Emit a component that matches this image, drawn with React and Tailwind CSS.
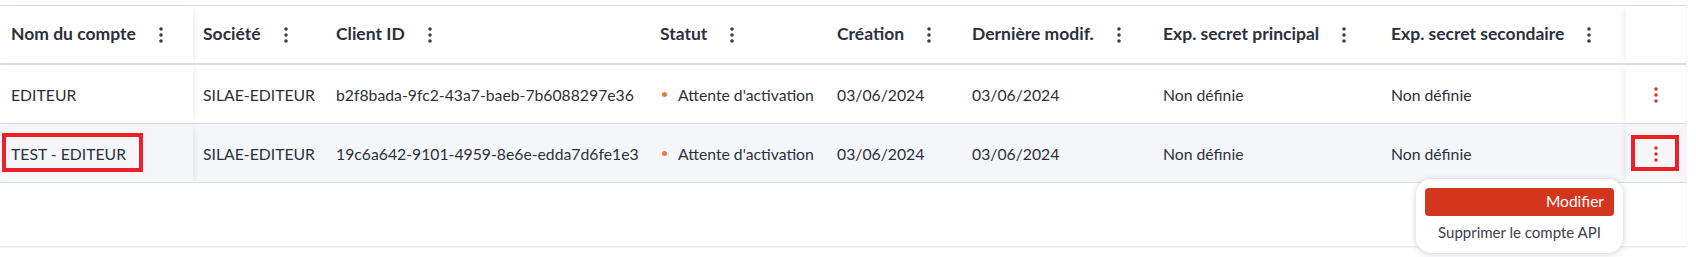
import { Fragment } from 'react'

const columns = [
  { label: 'Nom du compte', key: 'name' },
  { label: 'Société', key: 'company' },
  { label: 'Client ID', key: 'clientId' },
  { label: 'Statut', key: 'status' },
  { label: 'Création', key: 'created' },
  { label: 'Dernière modif.', key: 'updated' },
  { label: 'Exp. secret principal', key: 'expMain' },
  { label: 'Exp. secret secondaire', key: 'expSecond' },
]

const rows = [
  {
    name: 'EDITEUR',
    company: 'SILAE-EDITEUR',
    clientId: 'b2f8bada-9fc2-43a7-baeb-7b6088297e36',
    status: "Attente d'activation",
    created: '03/06/2024',
    updated: '03/06/2024',
    expMain: 'Non définie',
    expSecond: 'Non définie',
  },
  {
    name: 'TEST - EDITEUR',
    company: 'SILAE-EDITEUR',
    clientId: '19c6a642-9101-4959-8e6e-edda7d6fe1e3',
    status: "Attente d'activation",
    created: '03/06/2024',
    updated: '03/06/2024',
    expMain: 'Non définie',
    expSecond: 'Non définie',
    selected: true,
  },
]

const grid = 'grid grid-cols-[193px_133px_324px_177px_135px_191px_228px_245px_60px]'

function Kebab({ className }) {
  return (
    <svg width="4" height="16" viewBox="0 0 4 16" className={className}>
      <circle cx="2" cy="2" r="1.8" fill="currentColor" />
      <circle cx="2" cy="8" r="1.8" fill="currentColor" />
      <circle cx="2" cy="14" r="1.8" fill="currentColor" />
    </svg>
  )
}

function Cell({ col, row }) {
  if (col.key === 'status') {
    return (
      <span className="flex items-center">
        <span className="ml-[2px] mr-[11px] h-[5px] w-[5px] rounded-full bg-[#ea7a3c]" />
        {row.status}
      </span>
    )
  }
  return row[col.key]
}

export default function App() {
  return (
    <div className="h-[257px] w-[1696px] bg-white font-['Lato',sans-serif] text-[#2b303b]">
      <div className="relative mt-[5px] w-[1686px] border-t border-[#dcdde4] pb-[63px] shadow-[0_1px_2px_rgba(20,30,60,0.12)]">
        {/* header */}
        <div className={`${grid} h-[59px] border-b-2 border-[#dcdde4] text-[17.5px] font-bold`}>
          {columns.map((col, i) => (
            <div
              key={col.key}
              className={`flex items-center pl-[10px] ${i === 0 ? 'relative z-10 pl-[11px] shadow-[4px_0_6px_-3px_rgba(40,50,100,0.10)]' : ''}`}
            >
              <span>{col.label}</span>
              <Kebab className="ml-[23px] text-[#3a3f4a]" />
            </div>
          ))}
          <div className="shadow-[-4px_0_6px_-3px_rgba(40,50,100,0.10)]" />
        </div>

        {/* rows */}
        {rows.map((row) => (
          <div
            key={row.name}
            className={`${grid} h-[59px] border-b border-[#dcdde4] pt-px text-[15.75px] ${row.selected ? 'bg-[#f5f6fa]' : 'bg-white'}`}
          >
            {columns.map((col, i) => (
              <div
                key={col.key}
                className={`flex items-center pl-[10px] ${i === 0 ? 'relative z-10 pl-[11px] shadow-[4px_0_6px_-3px_rgba(40,50,100,0.10)]' : ''}`}
              >
                <Cell col={col} row={row} />
              </div>
            ))}
            <div className="flex items-center justify-center shadow-[-4px_0_6px_-3px_rgba(40,50,100,0.10)]">
              <Kebab className="text-[#d7362a]" />
            </div>
          </div>
        ))}

        {/* annotation boxes */}
        <div className="absolute left-[2px] top-[127px] z-20 h-[39px] w-[141px] border-[4px] border-[#ec1f27]" />
        <div className="absolute left-[1631px] top-[129px] z-20 h-[36px] w-[48px] border-[4px] border-[#ec1f27]" />

        {/* context menu */}
        <div className="absolute left-[1416px] top-[173px] z-20 flex h-[74px] w-[207px] flex-col items-center rounded-[15px] bg-white pt-[9px] shadow-[0_1px_6px_rgba(30,40,70,0.22)]">
          <button className="flex h-[28px] w-[189px] items-center justify-end rounded-[4px] bg-[#d4361d] pr-[10px] text-[15.5px] text-white">
            Modifier
          </button>
          <span className="mt-[5px] text-[15px] text-[#3d414a]">Supprimer le compte API</span>
        </div>
      </div>
    </div>
  )
}
